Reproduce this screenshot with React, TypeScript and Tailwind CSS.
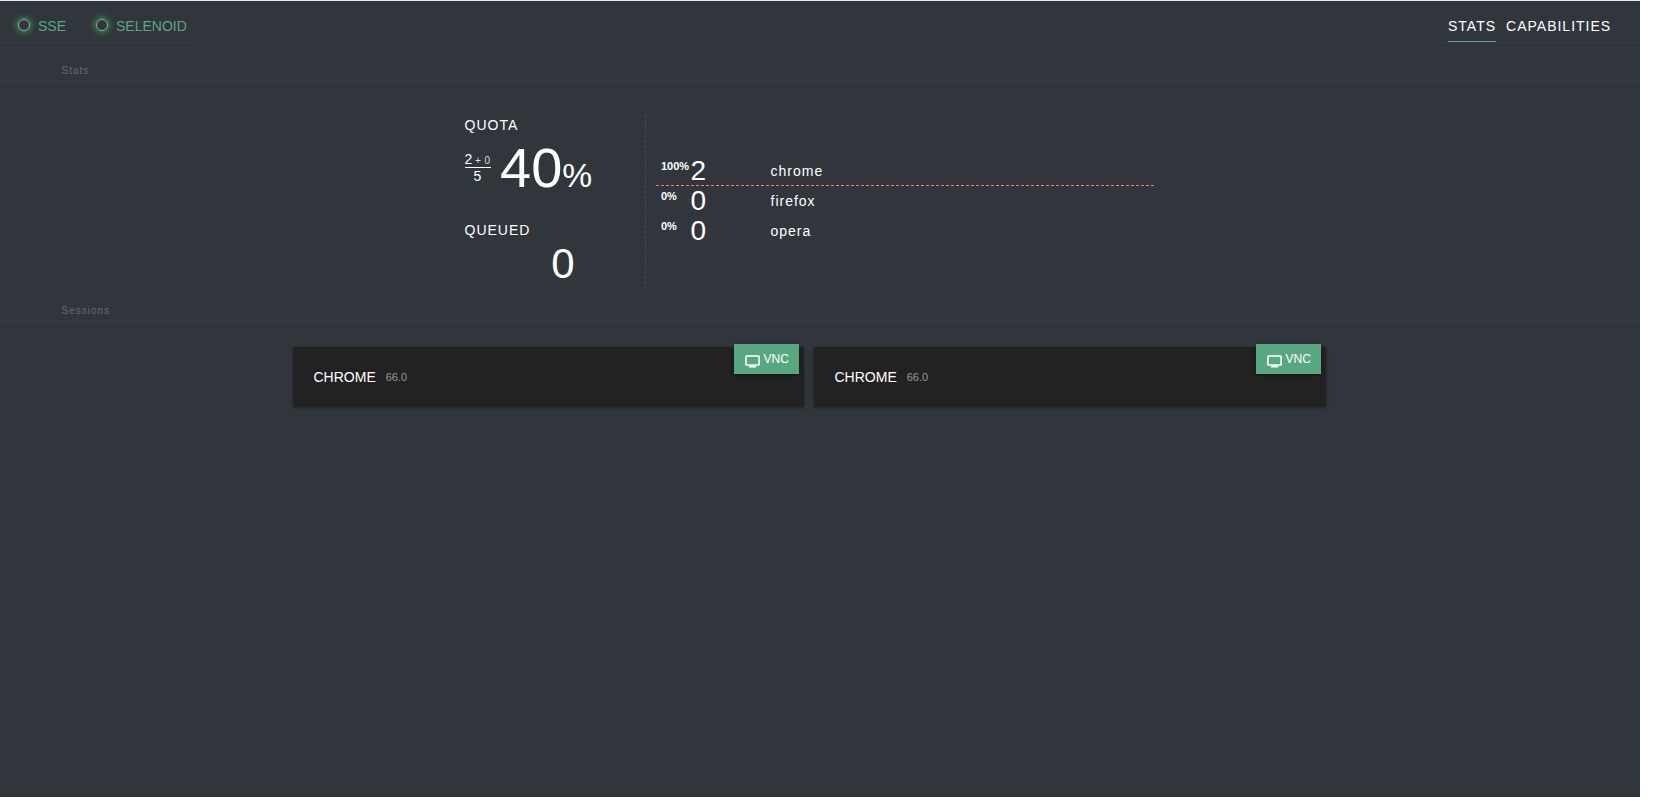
type Browser = { name: string; count: number; share: string; used?: boolean };

const browsers: Browser[] = [
  { name: 'chrome', count: 2, share: '100%', used: true },
  { name: 'firefox', count: 0, share: '0%' },
  { name: 'opera', count: 0, share: '0%' },
];

const sessions = [
  { id: 1, browser: 'CHROME', version: '66.0' },
  { id: 2, browser: 'CHROME', version: '66.0' },
];

function Status({ label }: { label: string }) {
  return (
    <div className="flex items-center">
      <span className="-mt-0.5 mr-2 size-3 rounded-full border border-[#7fb8a0] shadow-[0_0_6px_1px_#3fa34d]" />
      <span className="text-sm leading-4 text-[#59a781]">{label}</span>
    </div>
  );
}

function SectionTitle({ children }: { children: string }) {
  return (
    <div className="h-[17px] border-b border-[#383d44] pl-[61.5px] text-[10px] leading-[11px] tracking-[1px] text-[#666a6c]">
      {children}
    </div>
  );
}

function MonitorIcon() {
  return (
    <svg width="15" height="13" viewBox="0 0 15 13" className="mt-[2.5px]">
      <rect x="0.9" y="1" width="13.2" height="9" rx="0.8" fill="none" stroke="#fff" strokeWidth="1.6" />
      <path d="M5.2 10h4.6v1.2h1.4v1.3H3.8v-1.3h1.4z" fill="#fff" />
    </svg>
  );
}

function Session({ browser, version }: { browser: string; version: string }) {
  return (
    <div className="relative flex h-[60px] items-center bg-[#222] pl-[20.5px] shadow-[0_1px_4px_rgba(0,0,0,0.3)]">
      <span className="text-sm leading-4 text-white">{browser}</span>
      <span className="ml-2.5 text-[11px] leading-4 text-[#999]">{version}</span>
      <div className="absolute -top-[3px] right-[5px] flex h-[30px] w-[65px] items-start bg-[#59a781] pt-2 pl-[11px] shadow-[0_1px_4px_rgba(0,0,0,0.3)]">
        <MonitorIcon />
        <span className="ml-[3.5px] text-xs leading-[14px] text-white">VNC</span>
      </div>
    </div>
  );
}

export default function App() {
  return (
    <div className="h-[801px] overflow-hidden bg-white font-['Liberation_Sans',Arial,sans-serif]">
      <div className="h-[797px] w-[1640px] border-t border-[#e3e8e8] bg-[#31363d]">
        <header className="flex h-[42px] justify-between">
          <div className="flex w-[198px] gap-[30px] border-b border-[#383d44] pt-2 pl-[18px]">
            <Status label="SSE" />
            <Status label="SELENOID" />
          </div>
          <nav className="flex w-[202px] gap-2.5 border-b border-[#383d44] pt-[17px] pl-[10px] text-sm leading-4 tracking-[1px] text-white">
            <a className="h-6 border-b border-[#59a781]">STATS</a>
            <a>CAPABILITIES</a>
          </nav>
        </header>

        <div className="pt-[22px]">
          <SectionTitle>Stats</SectionTitle>
        </div>

        <section className="ml-[464.5px] flex h-[207px] pt-[33px] text-white">
          <div className="h-[174px] w-[181.5px] border-r border-dashed border-[#464b52]">
            <div className="pt-[2px] text-sm leading-4 tracking-[1px]">QUOTA</div>
            <div className="flex h-[70px] pt-[3px]">
              <div className="mt-[15px] w-[26px] text-sm leading-4">
                <div className="flex h-[17px] items-baseline justify-between border-b border-white">
                  <span>2</span>
                  <span className="text-[10px] tracking-[0.4px] text-[#ddd]">+ 0</span>
                </div>
                <div className="text-center">5</div>
              </div>
              <div className="ml-[9.5px] flex items-baseline text-[56px] leading-[64px]">
                40<span className="text-[33.6px]">%</span>
              </div>
            </div>
            <div className="pt-[19px] text-sm leading-4 tracking-[1px]">QUEUED</div>
            <div className="w-[110px] pt-[2px] text-right text-[42px] leading-[48px]">0</div>
          </div>

          <div className="ml-[10px] w-[498px] pt-[41px]">
            {browsers.map((b) => (
              <div
                key={b.name}
                className={`flex h-[30px] border-b border-dashed pl-[5px] ${b.used ? 'border-[#ff7b6b]' : 'border-transparent'}`}
              >
                <span className="w-[29.5px] pt-[4px] text-[11px] leading-3 font-bold whitespace-nowrap">{b.share}</span>
                <span className="w-[80px] text-[28px] leading-[29px]">{b.count}</span>
                <span className="pt-[7px] text-sm leading-4 tracking-[1px]">{b.name}</span>
              </div>
            ))}
          </div>
        </section>

        <div className="pt-[16px]">
          <SectionTitle>Sessions</SectionTitle>
        </div>

        <section className="mt-[25px] ml-[293px] grid w-[1033px] grid-cols-[511px_512px] gap-2.5">
          {sessions.map((s) => (
            <Session key={s.id} browser={s.browser} version={s.version} />
          ))}
        </section>
      </div>
    </div>
  );
}
